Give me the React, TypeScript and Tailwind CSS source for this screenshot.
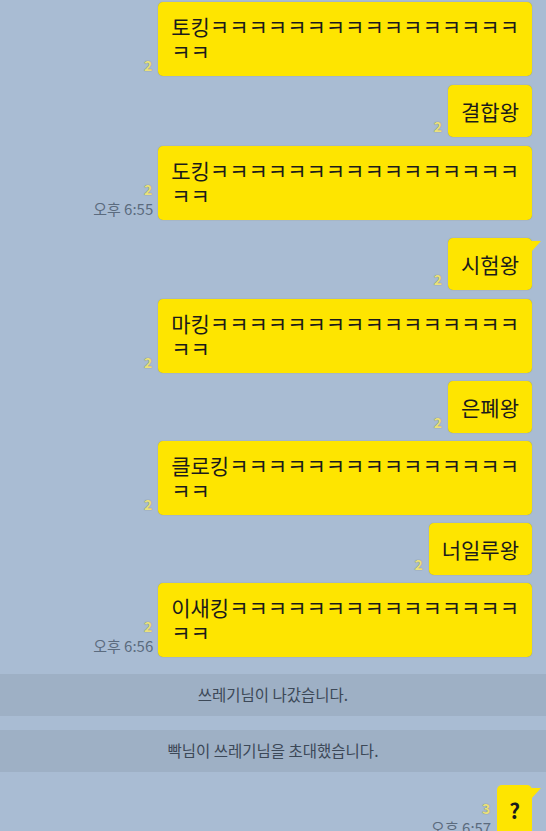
import React from "react";

const K = (n: number) => "ㅋ".repeat(n);

interface Msg {
  lines: string[];
  unread: string;
  time?: string;
  tail?: boolean;
  gapTop: string;
}

const messages: Msg[] = [
  { lines: ["토킹" + K(16), K(2)], unread: "2", gapTop: "mt-[2px]" },
  { lines: ["결합왕"], unread: "2", gapTop: "mt-[9px]" },
  { lines: ["도킹" + K(16), K(2)], unread: "2", time: "오후 6:55", gapTop: "mt-[9px]" },
  { lines: ["시험왕"], unread: "2", tail: true, gapTop: "mt-[18px]" },
  { lines: ["마킹" + K(16), K(2)], unread: "2", gapTop: "mt-[9px]" },
  { lines: ["은폐왕"], unread: "2", gapTop: "mt-[8px]" },
  { lines: ["클로킹" + K(15), K(2)], unread: "2", gapTop: "mt-[8px]" },
  { lines: ["너일루왕"], unread: "2", gapTop: "mt-[8px]" },
  { lines: ["이새킹" + K(15), K(2)], unread: "2", time: "오후 6:56", gapTop: "mt-[8px]" },
];

// Kakao style tail at the top right of a bubble
const Tail = () => (
  <svg
    className="absolute -right-[9px] top-[3px]"
    width="10"
    height="12"
    viewBox="0 0 10 12"
  >
    <polygon points="0,0 10,0 0,11" fill="#fee500" />
  </svg>
);

const Meta = ({ unread, time }: { unread: string; time?: string }) => (
  <div className="flex flex-col items-end pb-[4px] leading-none">
    <span className="pr-[1px] text-[14px] font-bold text-[#ebe07c] [text-shadow:0_0_1px_rgba(80,80,30,0.7)]">
      {unread}
    </span>
    {time ? <span className="mt-[5px] text-[15px] text-[#5b6b7e]">{time}</span> : undefined}
  </div>
);

const Bubble = ({ msg }: { msg: Msg }) => {
  const single = msg.lines.length === 1;
  return (
    <div className={`flex items-end justify-end gap-[5px] ${msg.gapTop}`}>
      <Meta unread={msg.unread} time={msg.time} />
      <div
        className={`relative rounded-[5px] bg-[#fee500] px-[13px] text-[21px] text-[#1b1b1b] shadow-[0_0_1px_rgba(120,110,0,0.6)] ${
          single ? "py-[13px] leading-[26px]" : "py-[12px] leading-[25px]"
        }`}
      >
        {msg.lines.map((line, i) => (
          <div key={i} className="whitespace-nowrap">
            {line}
          </div>
        ))}
        {msg.tail ? <Tail /> : undefined}
      </div>
    </div>
  );
};

const Notice = ({ text, gapTop }: { text: string; gapTop: string }) => (
  <div
    className={`flex h-[42px] items-center justify-center bg-[#9eb0c5] text-[15.5px] text-[#3c4857] ${gapTop}`}
  >
    {text}
  </div>
);

export default function App() {
  return (
    <div
      className="h-[831px] w-[546px] overflow-hidden bg-[#a9bcd3]"
      style={{ fontFamily: '"Noto Sans CJK KR", "Noto Sans", sans-serif' }}
    >
      <div className="pr-[14px]">
        {messages.map((m, i) => (
          <Bubble key={i} msg={m} />
        ))}
      </div>
      <Notice text="쓰레기님이 나갔습니다." gapTop="mt-[17px]" />
      <Notice text="빡님이 쓰레기님을 초대했습니다." gapTop="mt-[14px]" />
      <div className="pr-[14px]">
        <div className="mt-[13px] flex items-end justify-end gap-[6px]">
          <div className="flex flex-col items-end leading-none">
            <span className="pr-[1px] text-[14px] font-bold text-[#ebe07c] [text-shadow:0_0_1px_rgba(80,80,30,0.7)]">
              3
            </span>
            <span className="mt-[5px] text-[15px] text-[#5b6b7e]">오후 6:57</span>
          </div>
          <div className="relative h-[50px] rounded-[5px] bg-[#fee500] px-[12px] pt-[12px] text-[21px] font-bold leading-[26px] text-[#1b1b1b]">
            ?
            <Tail />
          </div>
        </div>
      </div>
    </div>
  );
}
